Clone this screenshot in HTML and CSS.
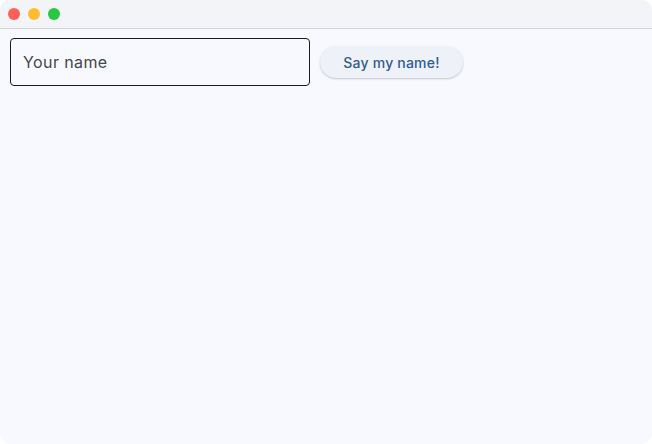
FILE: index.html
```html
<!DOCTYPE html>
<html>
<head>
<meta charset="utf-8">
<link rel="stylesheet" href="styles.css">
</head>
<body>
<div class="window">
  <div class="titlebar">
    <span class="light red"></span>
    <span class="light yellow"></span>
    <span class="light green"></span>
  </div>
  <div class="content">
    <input class="name-input" type="text" placeholder="Your name">
    <button class="say-btn">Say my name!</button>
  </div>
</div>
</body>
</html>
```
FILE: styles.css
```css
html, body {
  margin: 0;
  padding: 0;
  background: #ffffff;
}
.window {
  width: 652px;
  height: 444px;
  border-radius: 10px;
  overflow: hidden;
  background: #f8f9fe;
  display: flex;
  flex-direction: column;
  font-family: Inter, "Noto Sans", sans-serif;
}
.titlebar {
  height: 28px;
  background: #f3f4f8;
  border-bottom: 1px solid #d5d6da;
  display: flex;
  align-items: center;
  gap: 8px;
  padding-left: 8px;
  box-sizing: content-box;
}
.light {
  width: 12px;
  height: 12px;
  border-radius: 50%;
  display: block;
}
.red { background: #fe5f57; }
.yellow { background: #febc2e; }
.green { background: #28c840; }
.content {
  display: flex;
  align-items: center;
  gap: 10px;
  padding: 9px 10px;
}
.name-input {
  width: 300px;
  height: 48px;
  box-sizing: border-box;
  border: 1px solid #1b1b1b;
  border-radius: 4px;
  background: #f8f9fe;
  padding: 0 12px;
  font-family: Inter, "Noto Sans", sans-serif;
  font-size: 16px;
  letter-spacing: 0.4px;
  color: #222;
  outline: none;
}
.name-input::placeholder {
  color: #45464a;
}
.say-btn {
  height: 32px;
  width: 143px;
  border: none;
  border-radius: 16px;
  background: #eff1f8;
  box-shadow: 0 1px 2px rgba(0,0,0,0.22);
  color: #2f5b8e;
  font-family: Inter, "Noto Sans", sans-serif;
  font-weight: 500;
  font-size: 14px;
  letter-spacing: 0.2px;
  padding: 0;
}
```
